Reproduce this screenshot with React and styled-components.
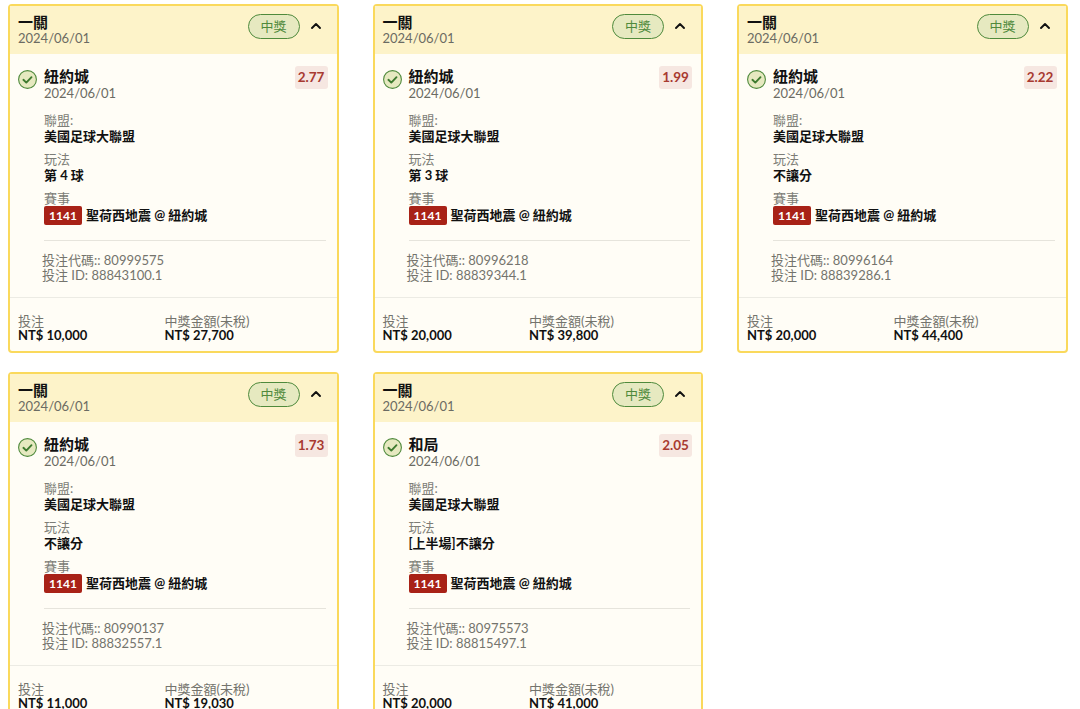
import styled, { createGlobalStyle } from "styled-components";

const GlobalStyle = createGlobalStyle`
  html, body {
    margin: 0;
    background: #fff;
    height: 709px;
    overflow: hidden;
    font-family: Lato, "Noto Sans CJK TC", sans-serif;
  }
`;

const Grid = styled.div`
  display: grid;
  grid-template-columns: repeat(3, 330.5px);
  column-gap: 34px;
  row-gap: 19px;
  padding: 4px 0 0 8px;
`;

const Card = styled.div`
  height: 349px;
  box-sizing: border-box;
  border: 2px solid #fad95c;
  border-radius: 4px;
  background: #fffdf6;
  display: flex;
  flex-direction: column;
`;

const Header = styled.div`
  height: 48px;
  flex: none;
  box-sizing: border-box;
  background: #fdf3c9;
  padding: 8px 16px 0 8px;
  display: flex;
  justify-content: space-between;
  align-items: flex-start;
`;

const Title = styled.div`
  font-size: 15px;
  font-weight: 700;
  line-height: 17px;
  color: #111;
`;

const DateText = styled.div`
  font-size: 13px;
  line-height: 15px;
  color: #6b6b63;
`;

const HeaderRight = styled.div`
  display: flex;
  align-items: center;
  gap: 11px;

  svg {
    margin-bottom: 2px;
  }
`;

const Status = styled.span`
  width: 52px;
  height: 25px;
  box-sizing: border-box;
  border: 1px solid #4f8a3c;
  border-radius: 13px;
  background: #e6e9c0;
  color: #4f8a3c;
  font-size: 13px;
  line-height: 23px;
  text-align: center;
`;

const Body = styled.div`
  flex: 1;
  padding: 14px 9px 0 8px;
`;

const Selection = styled.div`
  display: flex;
  align-items: flex-start;
`;

const CheckWrap = styled.div`
  width: 26px;
  flex: none;
  padding-top: 2px;
`;

const SelectionText = styled.div`
  flex: 1;
`;

const Name = styled.div`
  font-size: 15px;
  font-weight: 700;
  line-height: 17px;
  margin-bottom: 1px;
  color: #111;
`;

const Odds = styled.span`
  background: #f6e7e1;
  color: #a83a30;
  font-size: 13.5px;
  font-weight: 700;
  line-height: 23px;
  height: 23px;
  width: 33px;
  margin-top: -2px;
  text-align: center;
  border-radius: 3px;
`;

const Info = styled.div`
  margin: 11px 0 0 26px;
  display: flex;
  flex-direction: column;
  gap: 7px;
`;

const Label = styled.div`
  font-size: 13px;
  line-height: 16px;
  color: #7d7d76;
`;

const Value = styled.div`
  margin-top: 1px;
  font-size: 13px;
  font-weight: 700;
  line-height: 15px;
  color: #111;
`;

const Match = styled.div`
  display: flex;
  align-items: center;
  gap: 4px;
  font-size: 13px;
  font-weight: 700;
  line-height: 19px;
  color: #111;
`;

const MatchId = styled.span`
  width: 38px;
  height: 19px;
  background: #a82217;
  border-radius: 2px;
  color: #fff;
  font-size: 12px;
  text-align: center;
`;

const Divider = styled.hr`
  border: 0;
  border-top: 1px solid #e6e4dc;
  margin: 15px 2px 0 26px;
`;

const Codes = styled.div`
  margin: 12px 0 0 24px;
  font-size: 13px;
  line-height: 14.5px;
  color: #74746d;
`;

const Footer = styled.div`
  flex: none;
  height: 54px;
  box-sizing: border-box;
  border-top: 1px solid #ecebe4;
  padding: 16px 8px 0;
  display: grid;
  grid-template-columns: 146.5px 1fr;
`;

const FooterLabel = styled.div`
  font-size: 13px;
  line-height: 14px;
  color: #74746d;
`;

const FooterValue = styled.div`
  font-size: 13px;
  font-weight: 700;
  line-height: 14px;
  color: #111;
`;

const CheckIcon = () => (
  <svg width="19" height="19" viewBox="0 0 19 19" fill="none">
    <circle cx="9.5" cy="9.5" r="8.9" fill="#e6e9c0" stroke="#4f8a3c" strokeWidth="1.1" />
    <path d="M5.4 9.8l2.9 2.8 5.2-5.4" stroke="#3d7a2e" strokeWidth="1.9" strokeLinecap="round" strokeLinejoin="round" />
  </svg>
);

const ChevronUp = () => (
  <svg width="10" height="8" viewBox="0 0 10 8" fill="none">
    <path d="M1 6l4-4 4 4" stroke="#111" strokeWidth="1.9" strokeLinecap="round" strokeLinejoin="round" />
  </svg>
);

const bets = [
  { name: "紐約城", odds: "2.77", play: "第 4 球", code: "80999575", id: "88843100.1", stake: "10,000", win: "27,700" },
  { name: "紐約城", odds: "1.99", play: "第 3 球", code: "80996218", id: "88839344.1", stake: "20,000", win: "39,800" },
  { name: "紐約城", odds: "2.22", play: "不讓分", code: "80996164", id: "88839286.1", stake: "20,000", win: "44,400" },
  { name: "紐約城", odds: "1.73", play: "不讓分", code: "80990137", id: "88832557.1", stake: "11,000", win: "19,030" },
  { name: "和局", odds: "2.05", play: "[上半場]不讓分", code: "80975573", id: "88815497.1", stake: "20,000", win: "41,000" },
];

function BetCard({ bet }) {
  return (
    <Card>
      <Header>
        <div>
          <Title>一關</Title>
          <DateText>2024/06/01</DateText>
        </div>
        <HeaderRight>
          <Status>中獎</Status>
          <ChevronUp />
        </HeaderRight>
      </Header>
      <Body>
        <Selection>
          <CheckWrap>
            <CheckIcon />
          </CheckWrap>
          <SelectionText>
            <Name>{bet.name}</Name>
            <DateText>2024/06/01</DateText>
          </SelectionText>
          <Odds>{bet.odds}</Odds>
        </Selection>
        <Info>
          <div>
            <Label>聯盟:</Label>
            <Value>美國足球大聯盟</Value>
          </div>
          <div>
            <Label>玩法</Label>
            <Value>{bet.play}</Value>
          </div>
          <div>
            <Label>賽事</Label>
            <Match>
              <MatchId>1141</MatchId>
              聖荷西地震 @ 紐約城
            </Match>
          </div>
        </Info>
        <Divider />
        <Codes>
          <div>投注代碼:: {bet.code}</div>
          <div>投注 ID: {bet.id}</div>
        </Codes>
      </Body>
      <Footer>
        <div>
          <FooterLabel>投注</FooterLabel>
          <FooterValue>NT$ {bet.stake}</FooterValue>
        </div>
        <div>
          <FooterLabel>中獎金額(未稅)</FooterLabel>
          <FooterValue>NT$ {bet.win}</FooterValue>
        </div>
      </Footer>
    </Card>
  );
}

export default function App() {
  return (
    <>
      <GlobalStyle />
      <Grid>
        {bets.map((bet) => (
          <BetCard key={bet.code} bet={bet} />
        ))}
      </Grid>
    </>
  );
}
